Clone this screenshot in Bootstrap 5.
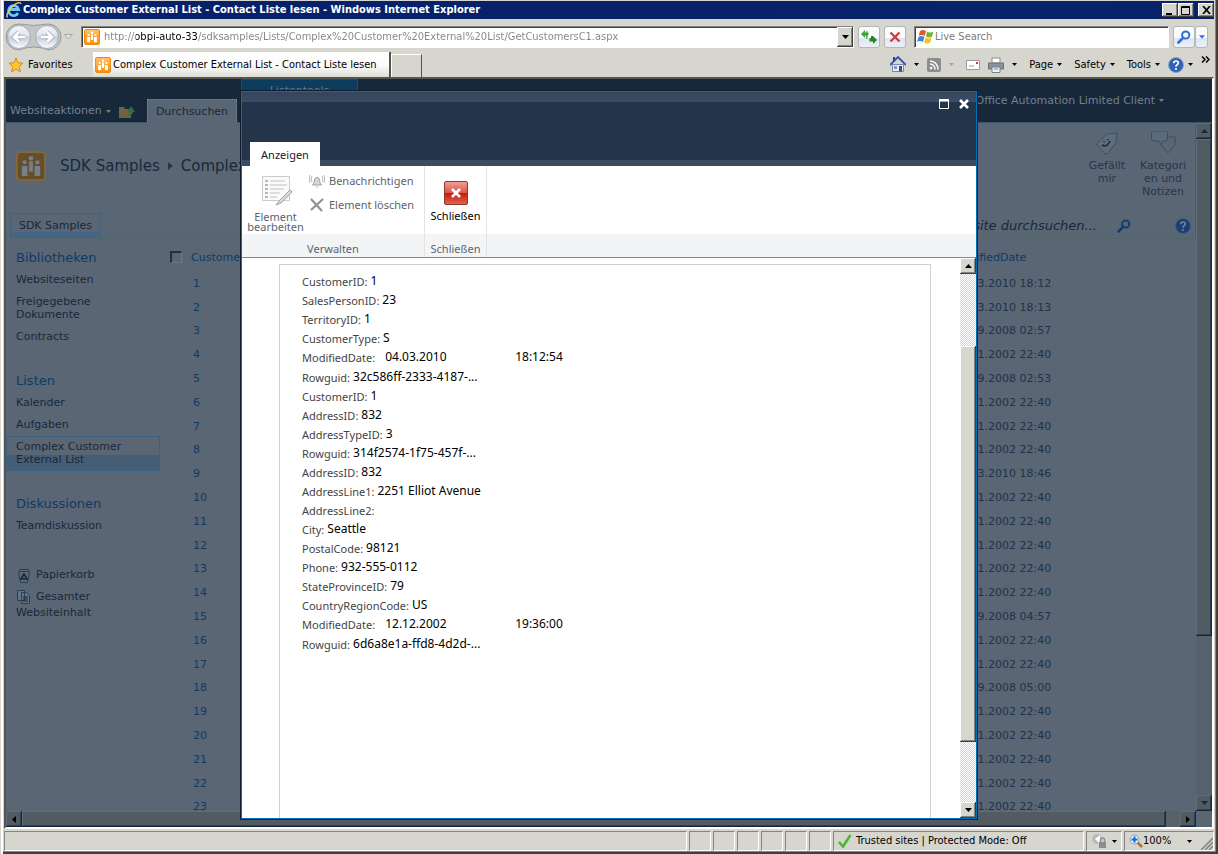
<!DOCTYPE html>
<html lang="de">
<head>
<meta charset="utf-8">
<meta name="viewport" content="width=device-width, initial-scale=1">
<title>Complex Customer External List - Contact Liste lesen</title>
<link href="https://cdn.jsdelivr.net/npm/bootstrap@5.3.0/dist/css/bootstrap.min.css" rel="stylesheet">
<style>
:root{--face:#d6d6ce;--dim:#5a6673;--dimline:#4b5d6e;--ink:#18283c;--blue:#0d3b66}
body{font:11px/14px "DejaVu Sans",Verdana,sans-serif;color:#000;background:var(--face)}
button,input{font:inherit;color:inherit;padding:0;border:0;background:none;border-radius:0}
button{display:flex;align-items:center;justify-content:center}
a{text-decoration:none;color:inherit}
svg{display:block;flex:none}
.win{height:100vh;overflow:hidden;background:var(--face);padding:1px 4px 3px 4px;box-shadow:inset 1px 0 #d6d6ce,inset 3px 0 #fff,inset -2px -2px #404040,inset -3px -3px #848484}
.ui{font-family:"DejaVu Sans Condensed","DejaVu Sans",sans-serif}
.titlebar{height:18px;background:linear-gradient(90deg,#06206a,#082469);color:#fff;font-weight:700}
.bevel{background:var(--face);box-shadow:inset -1px -1px #404040,inset 1px 1px #fff,inset -2px -2px #848484;flex:none}
.cap{width:16px;height:14px}
.navrow{height:33px;padding:2px 6px 0 0}
.field{height:22px;background:#fff;border:1px solid #848484;border-right-color:#fff;border-bottom-color:#fff;box-shadow:inset 1px 1px #404040}
.field svg{margin-left:2px}.field button svg{margin:0}
.addr{outline:0;min-width:0;color:#848284;-webkit-text-fill-color:transparent;background:linear-gradient(90deg,#848284 32px,#000 32px,#000 94px,#848284 94px);background-clip:text;-webkit-background-clip:text}
.find{outline:0;width:233px}.find::placeholder{color:#7b7b7b;opacity:1}
.tool{width:22px;height:22px;border:1px solid #b5b8b8;border-radius:3px;background:linear-gradient(#fbfbfc 55%,#dfe3f4 55%,#eef0f8)}
.tool.narrow{width:13px}
.tabrow{height:25px}
.fav{width:89px}
.ietab{width:298px;height:25px;background:linear-gradient(#fff,#fbfbfa 55%,#dcdcd6);border-right:2px solid #55554f}
.ietab svg{margin:0 2px 0 -2px}
.newtab{width:31px;height:23px;border:1px solid #fff;border-right:1px solid #55554f;border-bottom:0}
.view{border:2px solid #848484;border-top-color:#55554f;border-left-color:#55554f;border-right-color:#fff;border-bottom-color:#fff;background:var(--dim);color:var(--ink)}
.ribbonbar{height:44px;background:#18283b;color:#72808f;border-bottom:1px solid #3b5468}
.siteact{width:235px}
.browsetab{width:90px;height:24px;background:var(--dim);color:#18283c;margin-bottom:-1px;border:1px dotted #7b8794;border-bottom:0}
.listtab{width:117px;padding-top:4px;background:#0c3c5e;border:1px solid #0f5076;color:#5b7a90}
.headtop{height:90px}
.siteicon{margin:28px 10px 0}
.titleline{font-size:15px;line-height:20px;height:86px}
.social{width:48px;line-height:13px;text-align:center;color:#25364d}
.pagehead{border-right:1px solid var(--dimline);border-bottom:1px solid #52666a}
.navline{height:25px}
.sitetab{height:25px;width:91px;border:1px solid #3d6485;border-bottom:0;background:linear-gradient(#5a6673 76%,#466485 76%)}
.searchtext{font-size:13px}
.searchgo{margin:0 44px 0 20px}
.below{padding-top:8px}
.side{width:154px;line-height:13px}
.side a{display:block;padding:4px 10px 5px}
.side h2{font-size:13px;line-height:13px;font-weight:400;color:var(--blue);margin:0;padding:4px 10px 5px}
.side section{margin-bottom:22px}
.side section.wide{margin-bottom:27px}
.side .current{border:1px solid #3b6285;padding:3px 9px 4px;background:linear-gradient(#5a6673 54%,#455d75 54%)}
.side .tall{line-height:16px;padding-top:0}
.data th,.data td{padding:0;font-weight:400;vertical-align:middle;white-space:nowrap;line-height:14px}
.data th{vertical-align:top;padding-top:4px}
.data tr{height:24px}.data thead tr{height:25px}.data tbody tr:nth-child(5n+2){height:23px}
.data th,.data a{color:var(--blue)}.data td{color:#20324c}
.data td a{padding-left:2px}
.c1{width:10px}.c2{width:21px}.c3{width:762px}
.tick{appearance:none;width:12px;height:12px;margin:0;border:2px solid #22303f;border-right:1px solid #6b7783;border-bottom:1px solid #6b7783;display:block}
.vbar{width:16px}.hbar{height:16px}
.dim .sbtn,.dim .thumb{background:#525a62;box-shadow:inset -1px -1px #18283c,inset 1px 1px #5f6c79,inset -2px -2px #2d3f52}
.dim .track{background:repeating-conic-gradient(#525a62 0 25%,#5c6773 0 50%) 0 0/2px 2px}
.sbtn{width:16px;height:16px;flex:none}
.thumb{background:var(--face);box-shadow:inset -1px -1px #404040,inset 1px 1px #fff,inset -2px -2px #848484}
.lite{background:repeating-conic-gradient(#d6d6ce 0 25%,#fff 0 50%) 0 0/2px 2px}
.stage{position:absolute;inset:11px 0 7px}
.dlg{width:738px;max-width:100%;background:#fff;border:1px solid #101c2a;box-shadow:inset 0 0 0 1px #0072bc;padding:1px}
.dlghead{height:74px;background:linear-gradient(#34465e,#3b4c66 10px,#24344b 10px,#24344b 68px,#3a4b64 68px)}
.dlgtab{width:70px;height:24px;background:#fff;color:#18202c;padding-top:2px}
.dlg .rib{height:92px;border-bottom:1px solid #848688;color:#5b6470}
.rib .grp{border-right:1px solid #e1e3e6}
.grp.manage{width:183px}.grp.shut{width:62px}
.rib .foot{height:23px;background:#f3f4f6;padding-top:6px}
.big{width:67px;line-height:10px;padding-top:8px}
.smalls{gap:10px}
.shutbtn{padding-top:15px}
.seg{font-family:"Noto Sans","Open Sans",sans-serif}
.sheet{border:1px solid #cdd0cb;border-bottom:0;margin:6px 29px 0 37px;padding:7px 22px;color:#444}
.ln{height:19px;line-height:19px}.ln.two{height:20px}
.ln b{font-weight:400;font-size:12px;color:#000;height:17px;line-height:17px;margin-left:3px}
.ln .datebox{width:127px;margin-left:10px}
.status{height:20px;margin-top:2px;gap:2px}
.cell{border:1px solid #848484;border-right-color:#fff;border-bottom-color:#fff;height:20px;flex:none}
.slot{width:22px}.zone{width:251px}.lock{width:36px}.zoomcell{width:90px}
</style>
</head>
<body>
<svg width="0" height="0" class="position-absolute" aria-hidden="true">
<defs>
<linearGradient id="gOr" x1="0" y1="0" x2="0" y2="1"><stop offset="0" stop-color="#ffc36b"/><stop offset="1" stop-color="#ff8a00"/></linearGradient>
<linearGradient id="gRed" x1="0" y1="0" x2="0" y2="1"><stop offset="0" stop-color="#f0a195"/><stop offset=".48" stop-color="#de5748"/><stop offset=".52" stop-color="#c31d10"/><stop offset="1" stop-color="#e4654f"/></linearGradient>
<linearGradient id="gBall" x1="0" y1="0" x2="0" y2="1"><stop offset="0" stop-color="#f4f6fa"/><stop offset=".45" stop-color="#dfe4ee"/><stop offset=".5" stop-color="#c3cbdb"/><stop offset="1" stop-color="#fdfeff"/></linearGradient>
<symbol id="people" viewBox="0 0 16 16"><rect x=".5" y=".5" width="15" height="15" rx="1.5" fill="url(#gOr)" stroke="#f08a10"/><g fill="#fff"><circle cx="8" cy="3.8" r="1.2"/><circle cx="4.6" cy="6" r="1.1"/><circle cx="11.4" cy="6" r="1.1"/><path d="M7 5.5h2V11H7zM3.1 8h3v5.3h-3zM9.9 8h3v5.3h-3z"/></g></symbol>
<symbol id="dn" viewBox="0 0 7 4"><path d="M0 0h7L3.5 4z" fill="currentColor"/></symbol>
<symbol id="up" viewBox="0 0 7 4"><path d="M0 4h7L3.5 0z" fill="currentColor"/></symbol>
<symbol id="mag" viewBox="0 0 14 14"><circle cx="8.7" cy="5" r="3.6" fill="none" stroke="currentColor" stroke-width="2"/><path d="M6 7.800 1.500 12.500" stroke="currentColor" stroke-width="2.600" stroke-linecap="round"/></symbol>
</defs>
</svg>
<div class="win d-flex flex-column">
  <header class="titlebar ui d-flex align-items-center flex-shrink-0">
    <svg width="19" height="18" viewBox="0 0 18 18"><path d="M13.500 12A5 5 0 1 1 14 8.500H5" fill="none" stroke="#6cc6f5" stroke-width="2.800"/><path d="M3 16.500C1 14 5 8 9 4.500S16 1 16.500 3" fill="none" stroke="#f4c84c" stroke-width="1.400"/></svg>
    <span class="flex-grow-1 text-truncate">Complex Customer External List - Contact Liste lesen - Windows Internet Explorer</span>
    <button class="bevel cap" aria-label="Minimize"><svg width="10" height="9"><path d="M1 7h6v2H1z"/></svg></button>
    <button class="bevel cap" aria-label="Maximize"><svg width="10" height="9"><path d="M.5.5h8v8h-8zM0 1.500h9" fill="none" stroke="#000"/></svg></button>
    <button class="bevel cap ms-1" aria-label="Close"><svg width="9" height="8"><path d="M1 0l7 8M8 0 1 8" stroke="#000" stroke-width="1.700"/></svg></button>
  </header>

  <nav class="navrow ui d-flex align-items-center flex-shrink-0">
    <svg width="60" height="30" viewBox="0 0 60 30"><path d="M15 2Q30 5 44 2A13 13 0 0 1 44 28Q30 22 15 28A13 13 0 0 1 15 2z" fill="#c3c5c6" stroke="#979a9c"/><circle cx="15" cy="15" r="11.500" fill="url(#gBall)" stroke="#a2aab8"/><circle cx="43" cy="15" r="11.500" fill="url(#gBall)" stroke="#a2aab8"/><path d="M21 15H10m5-5-5 5 5 5M37 15h11m-5-5 5 5-5 5" fill="none" stroke="#a8b2c4" stroke-width="4.400"/><path d="M21 15H10m5-5-5 5 5 5M37 15h11m-5-5 5 5-5 5" fill="none" stroke="#fff" stroke-width="2.600"/></svg>
    <svg class="me-2" width="9" height="6"><path d="M.5.5h8l-4 4.500z" fill="#e7e7e2" stroke="#a5a6a2"/></svg>
    <div class="field d-flex align-items-center flex-grow-1 me-1">
      <svg width="16" height="16" class="me-1"><use href="#people"/></svg>
      <input class="addr flex-grow-1" aria-label="Address" value="http://obpi-auto-33/sdksamples/Lists/Complex%20Customer%20External%20List/GetCustomersC1.aspx">
      <button class="bevel cap h-100" aria-label="Show history"><svg width="7" height="4"><use href="#dn"/></svg></button>
    </div>
    <button class="tool me-1" aria-label="Refresh"><svg width="16" height="16"><path d="M0 5l4-4v2.500h3.500V6H6.500v2H5V6.500H4V9z" fill="#38a538"/><path d="M6 2q-1 4 0 8" fill="none" stroke="#2f9a2f"/><path d="M16 11l-4 4v-2.500H8.500V9H10V7h2V7z" fill="#238523"/></svg></button>
    <button class="tool me-2" aria-label="Stop"><svg width="12" height="12"><path d="M1.500 1.500l9 9m0-9-9 9" stroke="#cf3f3a" stroke-width="2.400"/></svg></button>
    <div class="field d-flex align-items-center me-1 col-auto">
      <svg width="18" height="18" viewBox="0 0 18 18"><path d="M3 3q3-2 6 0L7.700 8q-3-2-6 0z" fill="#e8562a"/><path d="M10 3.500q3 2 6.500 0L15 8.500q-3 2-6 0z" fill="#6fb536"/><path d="M1.500 9q3-2 6 0L6 14q-3-2-6 0z" fill="#3d86d8"/><path d="M8.700 9.500q3 2 6 0l-1.500 5q-3 2-6 0z" fill="#f7bf28"/></svg>
      <input class="find" placeholder="Live Search" aria-label="Live Search">
    </div>
    <button class="tool" aria-label="Search"><svg width="14" height="14" color="#2c6fe0"><use href="#mag"/></svg></button>
    <button class="tool narrow" aria-label="Search options"><svg width="6" height="4" color="#2c6fe0"><use href="#dn"/></svg></button>
  </nav>

  <div class="tabrow ui d-flex align-items-center flex-shrink-0">
    <button class="fav ps-1 justify-content-start"><svg width="16" height="16" class="me-1"><path d="M8 1l2 4.700 5 .5-3.800 3.400L12.400 15 8 12.200 3.600 15l1.200-5.400L1 6.200l5-.5z" fill="#fdc733" stroke="#d58b14"/></svg><span>Favorites</span></button>
    <div class="ietab d-flex align-items-center ps-1"><svg width="16" height="16"><use href="#people"/></svg><span class="text-nowrap overflow-hidden">Complex Customer External List - Contact Liste lesen</span></div>
    <div class="newtab align-self-end"></div>
    <div class="flex-grow-1"></div>
    <div class="d-flex align-items-center gap-2">
      <svg width="16" height="17"><path d="M2.500 8.500h11v7h-11z" fill="#e9edf5" stroke="#7a86a8"/><path d="M0 9l8-8 8 8" fill="none" stroke="#3553a8" stroke-width="1.800"/><path d="M9 10h3v5.500H9z" fill="#3c4a78"/><path d="M4 10h3v3H4z" fill="#7e9ad6"/><path d="M3 1h2v4H3z" fill="#2d3fae"/></svg>
      <svg width="5" height="3"><use href="#dn"/></svg>
      <svg width="14" height="14"><rect width="14" height="14" rx="2" fill="#8c8c8a"/><circle cx="4" cy="10" r="1.300" fill="#fff"/><path d="M3 6a5 5 0 0 1 5 5.500M3 3a8 8 0 0 1 8 8.500" fill="none" stroke="#fff" stroke-width="1.500"/></svg>
      <svg width="5" height="3" color="#a5a5a0"><use href="#dn"/></svg>
      <svg width="14" height="10" class="ms-1"><path d="M.5.5h13v9H.5z" fill="#fff" stroke="#9a9aa2"/><path d="M10 2h2v2h-2z" fill="#d33"/><path d="M3 6h5" stroke="#99a"/></svg>
      <svg width="16" height="16"><path d="M4 1h8v5H4z" fill="#fff" stroke="#8a8a8c"/><path d="M.5 6h15v6H.5z" fill="#8f9198" stroke="#6e7076"/><path d="M4 10h8v5.500H4z" fill="#eef2fb" stroke="#7b7d84"/><path d="M6 12h4" stroke="#48c"/></svg>
      <svg width="5" height="3"><use href="#dn"/></svg>
      <button class="gap-1 ms-1">Page <svg width="5" height="3"><use href="#dn"/></svg></button>
      <button class="gap-1 ms-1">Safety <svg width="5" height="3"><use href="#dn"/></svg></button>
      <button class="gap-1 ms-1">Tools <svg width="5" height="3"><use href="#dn"/></svg></button>
      <button class="gap-1" aria-label="Help"><svg width="16" height="16"><circle cx="8" cy="8" r="7.500" fill="#2e62b6" stroke="#8ba3cf"/><path d="M5.700 6.300Q5.700 4 8 4t2.300 2.100Q10.300 7.300 8.800 8 8 8.500 8 9.700" fill="none" stroke="#fff" stroke-width="1.700"/><circle cx="8" cy="12" r="1.100" fill="#fff"/></svg><svg width="5" height="3"><use href="#dn"/></svg></button>
      <button class="align-self-start me-1" aria-label="More"><svg width="9" height="7"><path d="M1 .5l3 3-3 3M5 .5l3 3-3 3" fill="none" stroke="#000" stroke-width="1.500"/></svg></button>
    </div>
  </div>

  <div class="view position-relative flex-grow-1 d-flex flex-column overflow-hidden">
    <div class="ribbonbar d-flex flex-shrink-0">
      <div class="siteact d-flex align-items-end">
        <button class="gap-1 ms-1 mb-1">Websiteaktionen <svg width="5" height="3"><use href="#dn"/></svg></button>
        <svg width="16" height="14" class="ms-2 mb-1"><path d="M0 3h5l1 2h6v9H0z" fill="#6f6340"/><path d="M6 14q4-1 5-6H8.500L12 2l4 6h-2q-1 5-8 6z" fill="#2f7040"/></svg>
        <a href="#" class="browsetab d-flex align-items-center justify-content-center ms-auto me-1">Durchsuchen</a>
      </div>
      <div class="listtab text-center">Listentools</div>
      <button class="ms-auto me-5 gap-1"><span>Office Automation Limited Client</span> <svg width="5" height="3"><use href="#dn"/></svg></button>
    </div>
    <div class="d-flex flex-grow-1 overflow-hidden dim">
      <main class="flex-grow-1 overflow-hidden">
        <div class="pagehead">
          <div class="headtop d-flex">
            <svg width="30" height="30" viewBox="0 0 16 16" class="siteicon"><rect x=".5" y=".5" width="15" height="15" rx="2" fill="#654e2c" stroke="#84683a"/><g fill="#76808b"><circle cx="8" cy="3.800" r="1.200"/><circle cx="4.600" cy="6" r="1.100"/><circle cx="11.400" cy="6" r="1.100"/><path d="M7 5.500h2V11H7zM3.100 8h3v5.300h-3zM9.900 8h3v5.300h-3z"/></g></svg>
            <div class="titleline d-flex align-items-center ps-1 gap-2 text-nowrap"><a href="#">SDK Samples</a><svg width="5" height="8"><path d="M0 0l5 4-5 4z" fill="#25364d"/></svg><span>Complex</span></div>
            <div class="ms-auto d-flex gap-2 pe-2 pt-2">
              <a href="#" class="social"><svg width="26" height="24" class="mx-auto mb-1"><path d="M2.500 13 13 3l10-1-1 10-9 11h-2z" fill="#5f6c7a" stroke="#34506c"/><path d="M8 14q5 3 8-4m-6 0v1m4-3v1" fill="none" stroke="#18283c" stroke-width="1.500"/></svg>Gefällt mir</a>
              <a href="#" class="social"><svg width="26" height="24" class="mx-auto mb-1"><path d="M11 14l7 8 7-8V6h-7" fill="none" stroke="#34506c"/><path d="M1.500 2q0-2 2-2h12q2 0 2 2v6q0 2-2 2h-3l-1 4-3-4h-5q-2 0-2-2z" fill="#5c6a78" stroke="#34506c"/></svg>Kategori en und Notizen</a>
            </div>
          </div>
          <div class="navline d-flex align-items-center">
            <a href="#" class="sitetab d-flex align-items-center justify-content-center ms-1">SDK Samples</a>
            <span class="searchtext ms-auto fst-italic">Diese Website durchsuchen...</span>
            <svg width="14" height="14" class="searchgo" color="#0f3f70"><use href="#mag"/></svg>
            <svg width="16" height="16" class="me-1"><circle cx="8" cy="8" r="7.500" fill="#183f78" stroke="#3d5d84"/><path d="M5.700 6.300Q5.700 4 8 4t2.300 2.100Q10.300 7.300 8.800 8 8 8.500 8 9.700" fill="none" stroke="#76828f" stroke-width="1.700"/><circle cx="8" cy="12" r="1.100" fill="#76828f"/></svg>
          </div>
        </div>
        <div class="below d-flex">
          <aside class="side flex-shrink-0">
            <section><h2>Bibliotheken</h2><a href="#">Websiteseiten</a><a href="#">Freigegebene<br>Dokumente</a><a href="#">Contracts</a></section>
            <section><h2>Listen</h2><a href="#">Kalender</a><a href="#">Aufgaben</a><a href="#" class="current">Complex Customer<br>External List</a></section>
            <section class="wide"><h2>Diskussionen</h2><a href="#">Teamdiskussion</a></section>
            <section><a href="#" class="d-flex"><svg width="16" height="16" class="me-1"><path d="M2.500 3.500h11l-2 11h-7zM3 1.500h10" fill="none" stroke="#25405c"/><path d="M5 11l3-5 3 5z" fill="none" stroke="#18283c" stroke-width="1.500"/></svg><span>Papierkorb</span></a>
            <a href="#" class="tall"><svg width="16" height="16" class="me-1 d-inline-block align-top"><path d="M1.500 1.500h7v10h-7zM5.500 3.500h5l3 3v8h-8z" fill="#667482" stroke="#25405c"/><path d="M7 8h5m-5 2h5m-5 2h5" stroke="#18283c"/></svg>Gesamter Websiteinhalt</a></section>
          </aside>
          <table class="data flex-grow-1">
            <colgroup><col class="c1"><col class="c2"><col class="c3"><col></colgroup>
            <thead><tr><th></th><th><input type="checkbox" class="tick" aria-label="Alle auswählen"></th><th>CustomerID</th><th>ModifiedDate</th></tr></thead>
            <tbody id="rows"></tbody>
          </table>
        </div>
      </main>
      <div class="vbar d-flex flex-column flex-shrink-0">
        <button class="sbtn" aria-label="Nach oben"><svg width="7" height="4"><use href="#up"/></svg></button>
        <div class="thumb" style="flex:498 1 0"></div><div class="track" style="flex:159 1 0"></div>
        <button class="sbtn" aria-label="Nach unten"><svg width="7" height="4"><use href="#dn"/></svg></button>
      </div>
    </div>
    <div class="hbar dim d-flex flex-shrink-0 pe-3">
      <button class="sbtn" aria-label="Nach links"><svg width="4" height="7"><path d="M4 0v7L0 3.500z"/></svg></button>
      <div class="thumb" style="flex:1145 1 0"></div><div class="track" style="flex:14 1 0"></div>
      <button class="sbtn" aria-label="Nach rechts"><svg width="4" height="7"><path d="M0 0v7l4-3.500z"/></svg></button>
    </div>

    <div class="stage d-flex justify-content-center">
      <div class="dlg d-flex flex-column text-black" role="dialog" aria-label="Contact Liste lesen">
        <div class="dlghead d-flex justify-content-between flex-shrink-0">
          <a href="#" class="dlgtab seg d-flex align-items-center justify-content-center align-self-end ms-2">Anzeigen</a>
          <div class="d-flex gap-1 pe-1 pt-1">
            <button class="sbtn" aria-label="Maximieren"><svg width="12" height="12"><path d="M1.500 1.500h9v9h-9z" fill="none" stroke="#fff"/><path d="M1 2.500h10" stroke="#fff" stroke-width="2"/></svg></button>
            <button class="sbtn" aria-label="Dialog schließen"><svg width="10" height="10"><path d="M1 1l8 8M9 1 1 9" stroke="#fff" stroke-width="2.600"/></svg></button>
          </div>
        </div>
        <div class="rib seg d-flex flex-shrink-0">
          <div class="grp manage d-flex flex-column">
            <div class="d-flex flex-grow-1">
              <button class="big flex-column justify-content-start"><svg width="32" height="34" class="mb-1"><path d="M2.500 2.500h27v24h-27z" fill="#fafafa" stroke="#c9cbcd"/><path d="M5 7h3m-3 4h3m-3 4h3m-3 4h3m-3 4h3" stroke="#777"/><path d="M10 7h15M10 11h17M10 15h14M10 19h10M10 23h7" stroke="#c0c2c4"/><path d="M30 16l-11 11-3 4 5-2L32 18z" fill="#d9dadc" stroke="#9fa1a3"/></svg>Element<br>bearbeiten</button>
              <div class="smalls d-flex flex-column align-items-start pt-2">
                <button class="gap-1"><svg width="16" height="14"><path d="M3.500 11q2-2 2-5a2.500 2.500 0 0 1 5 0q0 3 2 5z" fill="#d4d5d6" stroke="#a2a4a6"/><path d="M7 13h2M3 2Q1 5 3 8M13 2q2 3 0 6M1 1q-1.500 4 0 8M15 1q1.500 4 0 8" fill="none" stroke="#b5b7b9"/></svg>Benachrichtigen</button>
                <button class="gap-1"><svg width="16" height="14"><path d="M2 1l11 12M14 1 2 12" stroke="#8f9193" stroke-width="2.200"/></svg>Element löschen</button>
              </div>
            </div>
            <div class="foot d-flex align-items-center justify-content-center">Verwalten</div>
          </div>
          <div class="grp shut d-flex flex-column">
            <button class="shutbtn flex-column justify-content-start flex-grow-1 text-black"><svg width="24" height="24" class="mb-1"><rect x=".5" y=".5" width="23" height="23" rx="1.500" fill="url(#gRed)" stroke="#8c3a2c"/><path d="M8 8l8 8m0-8-8 8" stroke="#fff" stroke-width="2.600"/></svg>Schließen</button>
            <div class="foot d-flex align-items-center justify-content-center">Schließen</div>
          </div>
          <div class="flex-grow-1 d-flex flex-column justify-content-end"><div class="foot"></div></div>
        </div>
        <div class="d-flex flex-grow-1 overflow-hidden">
          <div class="flex-grow-1 d-flex flex-column">
            <div class="sheet seg flex-grow-1" id="sheet"></div>
          </div>
          <div class="vbar lite d-flex flex-column flex-shrink-0">
            <button class="sbtn bevel" aria-label="Nach oben"><svg width="7" height="4"><use href="#up"/></svg></button>
            <div style="flex:72 1 0"></div><div class="thumb" style="flex:396 1 0"></div><div style="flex:60 1 0"></div>
            <button class="sbtn bevel" aria-label="Nach unten"><svg width="7" height="4"><use href="#dn"/></svg></button>
          </div>
        </div>
      </div>
    </div>
  </div>

  <footer class="status ui d-flex align-items-center flex-shrink-0">
    <div class="cell flex-grow-1 flex-shrink-1"></div>
    <div class="cell slot"></div><div class="cell slot"></div><div class="cell slot"></div><div class="cell slot"></div><div class="cell slot"></div><div class="cell slot"></div>
    <div class="cell zone d-flex align-items-center"><svg width="14" height="14" class="mx-1"><path d="M1 8l4 4.500L12.500 1" fill="none" stroke="#4cb82e" stroke-width="2.600"/></svg>Trusted sites | Protected Mode: Off</div>
    <div class="cell lock d-flex align-items-center gap-1 px-1"><svg width="17" height="16"><circle cx="6" cy="6" r="5" fill="#b7b9ba"/><path d="M4 6l5-4v9" fill="#fff"/><path d="M8 9h7v6H8z" fill="#8b8d90"/><path d="M9.500 9V7a2 2 0 0 1 4 0v2" fill="none" stroke="#8b8d90" stroke-width="1.500"/></svg><svg width="5" height="3"><use href="#dn"/></svg></div>
    <div class="cell zoomcell d-flex align-items-center ps-1"><svg width="14" height="14"><path d="M8 8l5 5" stroke="#b5722f" stroke-width="2.600"/><circle cx="5.500" cy="5.500" r="4.500" fill="#e5f0fc" stroke="#7f9cc2"/><path d="M5.500 2.500v6m-3-3h6" stroke="#1767cf" stroke-width="2"/></svg>100%<svg width="5" height="3" class="ms-3"><use href="#dn"/></svg><svg width="13" height="13" class="ms-auto align-self-end"><path d="M1 13 13 1M5 13l8-8M9 13l4-4" stroke="#848484" stroke-width="1.600"/></svg></div>
  </footer>
</div>
<script>
const special={1:"04.03.2010 18:12",2:"04.03.2010 18:13",3:"15.09.2008 02:57",5:"15.09.2008 02:53",9:"04.03.2010 18:46",15:"15.09.2008 04:57",18:"15.09.2008 05:00"};
document.getElementById("rows").innerHTML=Array.from({length:23},(_,i)=>`<tr><td></td><td></td><td><a href="#">${i+1}</a></td><td>${special[i+1]||"21.11.2002 22:40"}</td></tr>`).join("");
const lines=[["CustomerID","1"],["SalesPersonID","23"],["TerritoryID","1"],["CustomerType","S"],["ModifiedDate","04.03.2010","18:12:54"],["Rowguid","32c586ff-2333-4187-..."],["CustomerID","1"],["AddressID","832"],["AddressTypeID","3"],["Rowguid","314f2574-1f75-457f-..."],["AddressID","832"],["AddressLine1","2251 Elliot Avenue"],["AddressLine2",""],["City","Seattle"],["PostalCode","98121"],["Phone","932-555-0112"],["StateProvinceID","79"],["CountryRegionCode","US"],["ModifiedDate","12.12.2002","19:36:00"],["Rowguid","6d6a8e1a-ffd8-4d2d-..."]];
document.getElementById("sheet").innerHTML=lines.map(([k,v,t])=>`<div class="ln d-flex ${t?"two":""}"><span>${k}:</span><b class="${t?"datebox":""}">${v}</b>${t?`<b>${t}</b>`:""}</div>`).join("");
</script>
<script src="https://cdn.jsdelivr.net/npm/bootstrap@5.3.0/dist/js/bootstrap.bundle.min.js"></script>
</body>
</html>
